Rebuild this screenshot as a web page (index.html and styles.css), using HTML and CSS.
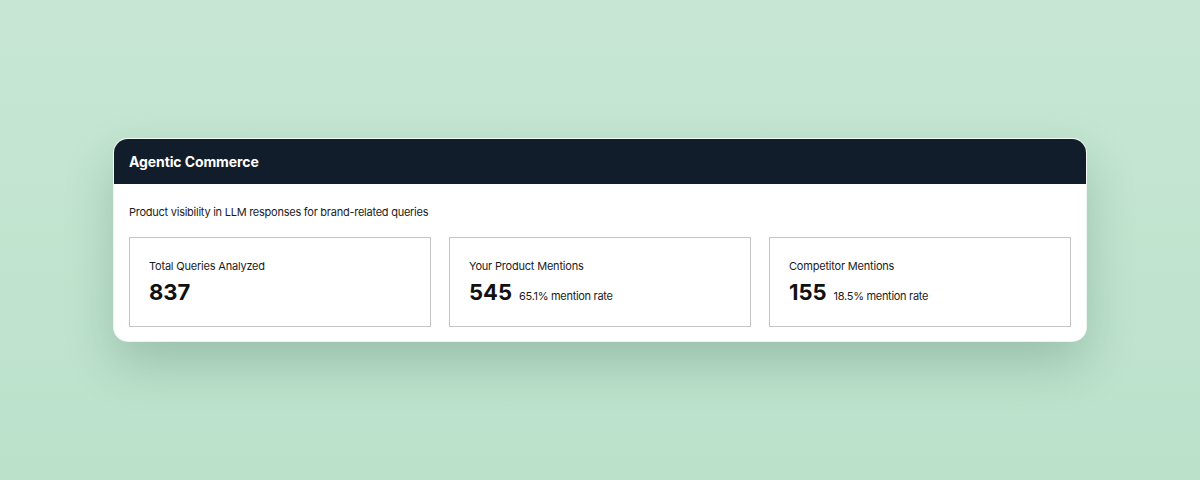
FILE: index.html
```html
<!DOCTYPE html>
<html lang="en">
<head>
  <meta charset="UTF-8" />
  <meta name="viewport" content="width=device-width, initial-scale=1.0"/>
  <title>Agentic Commerce</title>
  <link rel="stylesheet" href="styles.css">
</head>
<body>

  <!-- Visibility card -->
  <div class="card">
    <div class="card-header">
      <h1>Agentic Commerce</h1>
    </div>

    <div class="card-body">
      <p class="subtitle">Product visibility in LLM responses for brand-related queries</p>

      <div class="stats">
        <div class="stat">
          <div class="stat-label">Total Queries Analyzed</div>
          <div class="stat-value"><span class="num">837</span></div>
        </div>
        <div class="stat">
          <div class="stat-label">Your Product Mentions</div>
          <div class="stat-value"><span class="num">545</span><span class="rate">65.1% mention rate</span></div>
        </div>
        <div class="stat">
          <div class="stat-label">Competitor Mentions</div>
          <div class="stat-value"><span class="num">155</span><span class="rate">18.5% mention rate</span></div>
        </div>
      </div>
    </div>
  </div>

</body>
</html>
```

FILE: styles.css
```css
:root {
  --bg-top: #c7e7d4;
  --bg-bottom: #bbe1cb;
  --header-bg: #111d2a;
  --text-color: #1b1b1b;
  --box-border: #c4c4c4;
}

body {
  font-family: 'Inter', 'Noto Sans', sans-serif;
  margin: 0;
  height: 480px;
  display: flex;
  align-items: center;
  justify-content: center;
  background: linear-gradient(180deg, var(--bg-top), var(--bg-bottom));
  color: var(--text-color);
}

.card {
  width: 972px;
  background-color: white;
  border-radius: 14px;
  overflow: hidden;
  box-shadow: 0 0 0 1px rgba(255, 255, 255, 0.8), 0 22px 50px rgba(20, 70, 45, 0.22);
}

.card-header {
  background-color: var(--header-bg);
  height: 45px;
  display: flex;
  align-items: center;
  padding: 0 15px;
}

h1 {
  margin: 0;
  color: white;
  font-size: 14px;
  font-weight: 700;
  letter-spacing: -0.1px;
}

.card-body {
  padding: 20px 15px 14px;
}

.subtitle {
  margin: 0 0 17px;
  font-size: 11px;
  line-height: 16px;
  letter-spacing: -0.25px;
}

.stats {
  display: grid;
  grid-template-columns: repeat(3, 1fr);
  gap: 18px;
}

.stat {
  border: 1.5px solid var(--box-border);
  padding: 20px 19px 16px;
}

.stat-label {
  font-size: 11px;
  line-height: 16px;
  letter-spacing: -0.2px;
}

.stat-value {
  margin-top: 4px;
  display: flex;
  align-items: baseline;
  gap: 7px;
  line-height: 28px;
}

.num {
  font-size: 22px;
  font-weight: 700;
  color: #111;
}

.rate {
  font-size: 11px;
  letter-spacing: -0.3px;
}
```
